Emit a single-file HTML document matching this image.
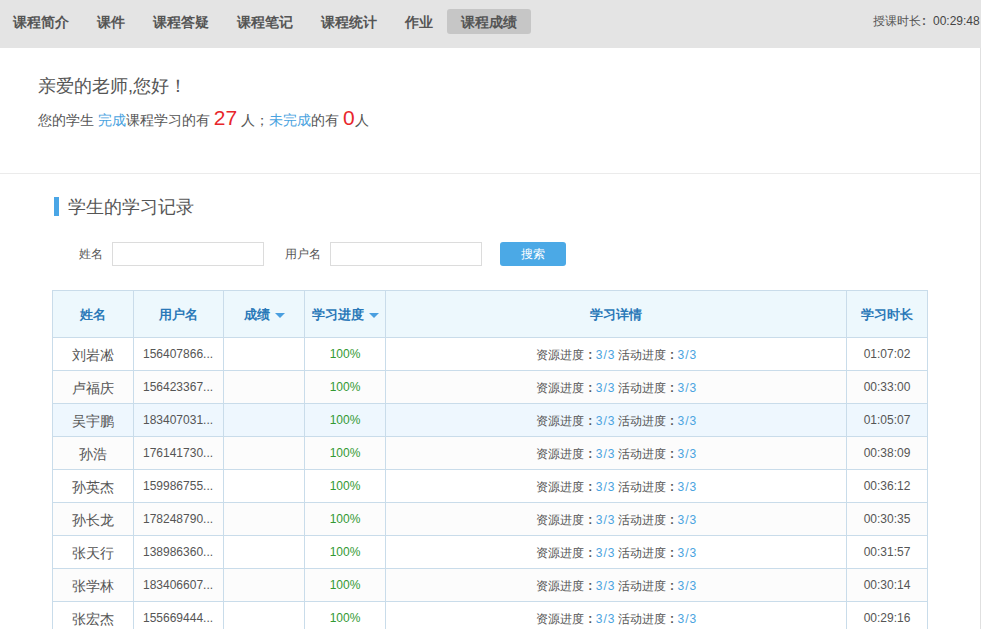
<!DOCTYPE html>
<html><head><meta charset="utf-8"><style>
*{margin:0;padding:0;box-sizing:border-box}
html,body{width:981px;height:629px;overflow:hidden;background:#fff}
body{position:relative;font-family:"Liberation Sans",sans-serif;color:#555}
.a{position:absolute;white-space:nowrap}
.nav{position:absolute;top:9px;height:25px;line-height:25px;font-size:14px;font-weight:bold;color:#555;padding:0 14px}
.sel{background:#c6c6c6;border-radius:3px}
.blue{color:#4aa3e0}
.red{color:#e8262b}
.hl{position:absolute;height:1px;background:#c9dcea}
.vl{position:absolute;width:1px;background:#c9dcea}
.c{position:absolute;text-align:center;white-space:nowrap}
.th{font-size:13px;font-weight:bold;color:#2a78b8}
.tri{display:inline-block;width:0;height:0;border-left:5px solid transparent;border-right:5px solid transparent;border-top:5px solid #4a9fe0;vertical-align:middle;margin-left:5px;position:relative;top:0px}
.td{font-size:12px;color:#555}
.nm{font-size:14px;color:#555}
.g{color:#339933}
.col{display:inline-block;width:12px;padding-left:1px;font-weight:bold}
.ls{letter-spacing:1px}
.sp{display:inline-block;width:3px}
</style></head><body>

<div class="a" style="left:0;top:0;width:981px;height:48px;background:#e4e4e4"></div>
<div class="nav" style="left:-1px"><span style="position:relative;top:1px">课程简介</span></div>
<div class="nav" style="left:83px"><span style="position:relative;top:1px">课件</span></div>
<div class="nav" style="left:139px"><span style="position:relative;top:1px">课程答疑</span></div>
<div class="nav" style="left:223px"><span style="position:relative;top:1px">课程笔记</span></div>
<div class="nav" style="left:307px"><span style="position:relative;top:1px">课程统计</span></div>
<div class="nav" style="left:391px"><span style="position:relative;top:1px">作业</span></div>
<div class="nav sel" style="left:447px"><span style="position:relative;top:1px">课程成绩</span></div>
<div class="a" style="left:873px;top:12px;font-size:12px;line-height:18px;color:#555">授课时长<span class="col">:</span><span style="color:#444">00:29:48</span></div>
<div class="a" style="left:980px;top:48px;width:1px;height:581px;background:#e0e0e0"></div>
<div class="a" style="left:38px;top:74px;font-size:18px;line-height:24px;color:#555">亲爱的老师,您好！</div>
<div class="a" style="left:38px;top:104px;font-size:14px;line-height:28px;color:#555">您的学生 <span class="blue">完成</span>课程学习的有 <span class="red" style="font-size:21px">27</span> 人；<span class="blue">未完成</span>的有 <span class="red" style="font-size:21px">0</span>人</div>
<div class="a" style="left:0;top:173px;width:980px;height:1px;background:#ebebeb"></div>
<div class="a" style="left:54px;top:197px;width:5px;height:19px;background:#4aa6e6"></div>
<div class="a" style="left:68px;top:195px;font-size:18px;line-height:24px;color:#555">学生的学习记录</div>
<div class="a" style="left:79px;top:245px;font-size:12px;line-height:18px">姓名</div>
<div class="a" style="left:112px;top:242px;width:152px;height:24px;border:1px solid #dcdcdc"></div>
<div class="a" style="left:285px;top:245px;font-size:12px;line-height:18px">用户名</div>
<div class="a" style="left:330px;top:242px;width:152px;height:24px;border:1px solid #dcdcdc"></div>
<div class="a" style="left:500px;top:242px;width:66px;height:24px;background:#4ba9e6;border-radius:3px;color:#fff;font-size:12px;line-height:24px;text-align:center">搜索</div>
<div class="a" style="left:52px;top:290px;width:876px;height:47px;background:#edf8fd"></div>
<div class="a" style="left:52px;top:337px;width:876px;height:33px;background:#fff"></div>
<div class="a" style="left:52px;top:370px;width:876px;height:33px;background:#fcfcfc"></div>
<div class="a" style="left:52px;top:403px;width:876px;height:33px;background:#eef7fe"></div>
<div class="a" style="left:52px;top:436px;width:876px;height:33px;background:#fcfcfc"></div>
<div class="a" style="left:52px;top:469px;width:876px;height:33px;background:#fff"></div>
<div class="a" style="left:52px;top:502px;width:876px;height:33px;background:#fcfcfc"></div>
<div class="a" style="left:52px;top:535px;width:876px;height:33px;background:#fff"></div>
<div class="a" style="left:52px;top:568px;width:876px;height:33px;background:#fcfcfc"></div>
<div class="a" style="left:52px;top:601px;width:876px;height:33px;background:#fff"></div>
<div class="vl" style="left:52px;top:290px;height:345px"></div>
<div class="vl" style="left:133px;top:290px;height:345px"></div>
<div class="vl" style="left:223px;top:290px;height:345px"></div>
<div class="vl" style="left:304px;top:290px;height:345px"></div>
<div class="vl" style="left:385px;top:290px;height:345px"></div>
<div class="vl" style="left:846px;top:290px;height:345px"></div>
<div class="vl" style="left:927px;top:290px;height:345px"></div>
<div class="hl" style="left:52px;top:290px;width:876px"></div>
<div class="hl" style="left:52px;top:337px;width:876px"></div>
<div class="hl" style="left:52px;top:370px;width:876px"></div>
<div class="hl" style="left:52px;top:403px;width:876px"></div>
<div class="hl" style="left:52px;top:436px;width:876px"></div>
<div class="hl" style="left:52px;top:469px;width:876px"></div>
<div class="hl" style="left:52px;top:502px;width:876px"></div>
<div class="hl" style="left:52px;top:535px;width:876px"></div>
<div class="hl" style="left:52px;top:568px;width:876px"></div>
<div class="hl" style="left:52px;top:601px;width:876px"></div>
<div class="hl" style="left:52px;top:634px;width:876px"></div>
<div class="c th" style="left:53px;top:292px;width:80px;height:46px;line-height:46px">姓名</div>
<div class="c th" style="left:134px;top:292px;width:89px;height:46px;line-height:46px">用户名</div>
<div class="c th" style="left:224px;top:292px;width:80px;height:46px;line-height:46px">成绩<i class="tri"></i></div>
<div class="c th" style="left:305px;top:292px;width:80px;height:46px;line-height:46px">学习进度<i class="tri"></i></div>
<div class="c th" style="left:386px;top:292px;width:460px;height:46px;line-height:46px">学习详情</div>
<div class="c th" style="left:847px;top:292px;width:80px;height:46px;line-height:46px">学习时长</div>
<div class="c nm" style="left:53px;top:339px;width:80px;height:32px;line-height:32px">刘岩凇</div>
<div class="c td" style="left:143px;top:338px;height:32px;line-height:32px;text-align:left">156407866...</div>
<div class="c td g" style="left:305px;top:338px;width:80px;height:32px;line-height:32px">100%</div>
<div class="c td" style="left:386px;top:339px;width:460px;height:32px;line-height:32px">资源进度<span class="col">:</span><span class="blue"><span class="ls">3/</span>3</span><span class="sp"></span>活动进度<span class="col">:</span><span class="blue"><span class="ls">3/</span>3</span></div>
<div class="c td" style="left:847px;top:338px;width:80px;height:32px;line-height:32px">01:07:02</div>
<div class="c nm" style="left:53px;top:372px;width:80px;height:32px;line-height:32px">卢福庆</div>
<div class="c td" style="left:143px;top:371px;height:32px;line-height:32px;text-align:left">156423367...</div>
<div class="c td g" style="left:305px;top:371px;width:80px;height:32px;line-height:32px">100%</div>
<div class="c td" style="left:386px;top:372px;width:460px;height:32px;line-height:32px">资源进度<span class="col">:</span><span class="blue"><span class="ls">3/</span>3</span><span class="sp"></span>活动进度<span class="col">:</span><span class="blue"><span class="ls">3/</span>3</span></div>
<div class="c td" style="left:847px;top:371px;width:80px;height:32px;line-height:32px">00:33:00</div>
<div class="c nm" style="left:53px;top:405px;width:80px;height:32px;line-height:32px">吴宇鹏</div>
<div class="c td" style="left:143px;top:404px;height:32px;line-height:32px;text-align:left">183407031...</div>
<div class="c td g" style="left:305px;top:404px;width:80px;height:32px;line-height:32px">100%</div>
<div class="c td" style="left:386px;top:405px;width:460px;height:32px;line-height:32px">资源进度<span class="col">:</span><span class="blue"><span class="ls">3/</span>3</span><span class="sp"></span>活动进度<span class="col">:</span><span class="blue"><span class="ls">3/</span>3</span></div>
<div class="c td" style="left:847px;top:404px;width:80px;height:32px;line-height:32px">01:05:07</div>
<div class="c nm" style="left:53px;top:438px;width:80px;height:32px;line-height:32px">孙浩</div>
<div class="c td" style="left:143px;top:437px;height:32px;line-height:32px;text-align:left">176141730...</div>
<div class="c td g" style="left:305px;top:437px;width:80px;height:32px;line-height:32px">100%</div>
<div class="c td" style="left:386px;top:438px;width:460px;height:32px;line-height:32px">资源进度<span class="col">:</span><span class="blue"><span class="ls">3/</span>3</span><span class="sp"></span>活动进度<span class="col">:</span><span class="blue"><span class="ls">3/</span>3</span></div>
<div class="c td" style="left:847px;top:437px;width:80px;height:32px;line-height:32px">00:38:09</div>
<div class="c nm" style="left:53px;top:471px;width:80px;height:32px;line-height:32px">孙英杰</div>
<div class="c td" style="left:143px;top:470px;height:32px;line-height:32px;text-align:left">159986755...</div>
<div class="c td g" style="left:305px;top:470px;width:80px;height:32px;line-height:32px">100%</div>
<div class="c td" style="left:386px;top:471px;width:460px;height:32px;line-height:32px">资源进度<span class="col">:</span><span class="blue"><span class="ls">3/</span>3</span><span class="sp"></span>活动进度<span class="col">:</span><span class="blue"><span class="ls">3/</span>3</span></div>
<div class="c td" style="left:847px;top:470px;width:80px;height:32px;line-height:32px">00:36:12</div>
<div class="c nm" style="left:53px;top:504px;width:80px;height:32px;line-height:32px">孙长龙</div>
<div class="c td" style="left:143px;top:503px;height:32px;line-height:32px;text-align:left">178248790...</div>
<div class="c td g" style="left:305px;top:503px;width:80px;height:32px;line-height:32px">100%</div>
<div class="c td" style="left:386px;top:504px;width:460px;height:32px;line-height:32px">资源进度<span class="col">:</span><span class="blue"><span class="ls">3/</span>3</span><span class="sp"></span>活动进度<span class="col">:</span><span class="blue"><span class="ls">3/</span>3</span></div>
<div class="c td" style="left:847px;top:503px;width:80px;height:32px;line-height:32px">00:30:35</div>
<div class="c nm" style="left:53px;top:537px;width:80px;height:32px;line-height:32px">张天行</div>
<div class="c td" style="left:143px;top:536px;height:32px;line-height:32px;text-align:left">138986360...</div>
<div class="c td g" style="left:305px;top:536px;width:80px;height:32px;line-height:32px">100%</div>
<div class="c td" style="left:386px;top:537px;width:460px;height:32px;line-height:32px">资源进度<span class="col">:</span><span class="blue"><span class="ls">3/</span>3</span><span class="sp"></span>活动进度<span class="col">:</span><span class="blue"><span class="ls">3/</span>3</span></div>
<div class="c td" style="left:847px;top:536px;width:80px;height:32px;line-height:32px">00:31:57</div>
<div class="c nm" style="left:53px;top:570px;width:80px;height:32px;line-height:32px">张学林</div>
<div class="c td" style="left:143px;top:569px;height:32px;line-height:32px;text-align:left">183406607...</div>
<div class="c td g" style="left:305px;top:569px;width:80px;height:32px;line-height:32px">100%</div>
<div class="c td" style="left:386px;top:570px;width:460px;height:32px;line-height:32px">资源进度<span class="col">:</span><span class="blue"><span class="ls">3/</span>3</span><span class="sp"></span>活动进度<span class="col">:</span><span class="blue"><span class="ls">3/</span>3</span></div>
<div class="c td" style="left:847px;top:569px;width:80px;height:32px;line-height:32px">00:30:14</div>
<div class="c nm" style="left:53px;top:603px;width:80px;height:32px;line-height:32px">张宏杰</div>
<div class="c td" style="left:143px;top:602px;height:32px;line-height:32px;text-align:left">155669444...</div>
<div class="c td g" style="left:305px;top:602px;width:80px;height:32px;line-height:32px">100%</div>
<div class="c td" style="left:386px;top:603px;width:460px;height:32px;line-height:32px">资源进度<span class="col">:</span><span class="blue"><span class="ls">3/</span>3</span><span class="sp"></span>活动进度<span class="col">:</span><span class="blue"><span class="ls">3/</span>3</span></div>
<div class="c td" style="left:847px;top:602px;width:80px;height:32px;line-height:32px">00:29:16</div>
</body></html>
